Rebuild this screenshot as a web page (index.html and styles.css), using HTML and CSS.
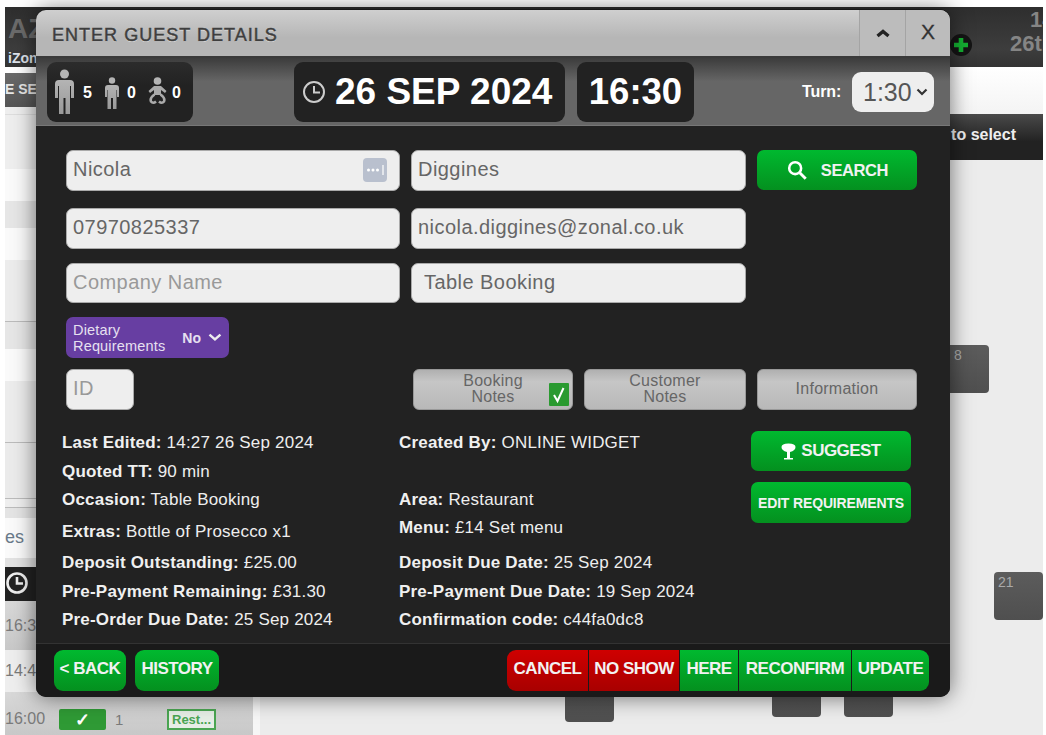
FILE: index.html
```html
<!DOCTYPE html>
<html lang="en">
<head>
<meta charset="utf-8">
<title>Enter Guest Details</title>
<link rel="stylesheet" href="styles.css">
</head>
<body>
<div class="app">
  <header class="topbar">
    <div class="brand"><span class="brand-big">AZ</span><span class="brand-small">iZonal</span></div>
    <div class="topbar-right">
      <span class="plus"><svg width="22" height="22" viewBox="0 0 22 22"><circle cx="11" cy="11" r="11" fill="#141414"/><path d="M11 4v14M4 11h14" stroke="#14b032" stroke-width="4.600"/></svg></span>
      <span class="top-date"><span class="top-time">14</span>26th</span>
    </div>
  </header>
  <div class="workspace">
    <aside class="side">
      <div class="side-gap"></div>
      <div class="side-head">E SEARCH</div>
      <div class="band b1"></div>
      <div class="band b2"></div>
      <div class="band b3"></div>
      <div class="band b4"></div>
      <div class="band b5 lined"></div>
      <div class="band b6"></div>
      <div class="band b7"></div>
      <div class="band b8 lined"></div>
      <div class="band b9 lined"></div>
      <div class="band b10 lined"></div>
      <div class="band b11"></div>
      <div class="band b12">es</div>
      <div class="band b13"></div>
      <div class="side-clock"><svg width="24" height="24" viewBox="0 0 24 24"><circle cx="12" cy="12" r="9.500" fill="none" stroke="#eee" stroke-width="2.600"/><path d="M12 6v6.500h6" fill="none" stroke="#eee" stroke-width="2.600"/></svg></div>
      <div class="slot grey"><span class="slot-time">16:30</span></div>
      <div class="slot light"><span class="slot-time">14:45</span></div>
      <div class="slot grey last">
        <span class="slot-time">16:00</span>
        <span class="slot-check">&#10003;</span>
        <span class="slot-num">1</span>
        <span class="slot-tag">Rest...</span>
      </div>
    </aside>
    <main class="floor">
      <div class="floor-gap"></div>
      <div class="floor-head">to select</div>
      <div class="table t8"><span>8</span></div>
      <div class="table t21"><span>21</span></div>
      <div class="table t-a"></div>
      <div class="table t-b"></div>
      <div class="table t-c"></div>
    </main>
  </div>
</div>

<section class="modal">
  <div class="titlebar">
    <h1 class="title">ENTER GUEST DETAILS</h1>
    <button class="tb-btn"><svg width="16" height="10" viewBox="0 0 16 10"><path d="M2.500 8 8 3.500 13.500 8" fill="none" stroke="#222" stroke-width="3.400"/></svg></button>
    <button class="tb-btn tb-x">X</button>
  </div>
  <div class="subbar">
    <div class="pill guests">
      <svg class="ic-adult" width="19" height="45" viewBox="0 0 19 45"><defs><linearGradient id="pg" x1="0" y1="0" x2="0" y2="1"><stop offset="0" stop-color="#b4b4b4"/><stop offset="1" stop-color="#999"/></linearGradient></defs><circle cx="9.500" cy="5" r="4.500" fill="#b4b4b4"/><path d="M4 11h11q4 0 4 4v14h-3V17h-1v28h-4.500V29h-2v16H4V17H3v12H0V15q0-4 4-4z" fill="url(#pg)"/></svg>
      <b class="count c1">5</b>
      <svg class="ic-teen" width="14" height="32" viewBox="0 0 14 32"><circle cx="7" cy="3.500" r="3.200" fill="#b4b4b4"/><path d="M3 8h8q3 0 3 3v9h-2v-7h-.5v19H8V21H6v11H2.500V13H2v7H0v-9q0-3 3-3z" fill="url(#pg)"/></svg>
      <b class="count c2">0</b>
      <svg class="ic-baby" width="19" height="28" viewBox="0 0 19 28"><circle cx="9.500" cy="4" r="3.800" fill="#b4b4b4"/><path d="M6 9h7l5.500 5-1.500 2-4-3v5H6v-5l-4 3-1.500-2z" fill="#aaa"/><path d="M6.500 17.500Q1.500 21 3 24.500q2 2.500 5 0M12.500 17.500q5 3.500 3.500 7-2 2.500-5 0" fill="none" stroke="#aaa" stroke-width="2.600"/></svg>
      <b class="count c3">0</b>
    </div>
    <div class="pill when">
      <svg width="24" height="24" viewBox="0 0 24 24"><circle cx="12" cy="12" r="10" fill="none" stroke="#ccc" stroke-width="2"/><path d="M12 6v6.500h6" fill="none" stroke="#ccc" stroke-width="2"/></svg>
      <span>26 SEP 2024</span>
    </div>
    <div class="pill clock">16:30</div>
    <label class="turn">Turn:</label>
    <div class="turn-wrap">
      <select class="turn-select"><option>1:30</option></select>
      <svg class="turn-chev" width="12" height="8" viewBox="0 0 12 8"><path d="M1.500 1.500 6 6l4.500-4.500" fill="none" stroke="#333" stroke-width="2.200"/></svg>
    </div>
  </div>

  <div class="body">
    <div class="form-row">
      <div class="field-wrap">
        <input class="field" value="Nicola">
        <span class="key"><svg width="24" height="24" viewBox="0 0 24 24"><rect width="24" height="24" rx="4" fill="#b9c0ce"/><circle cx="5.500" cy="12" r="1.500" fill="#fff"/><circle cx="10" cy="12" r="1.500" fill="#fff"/><circle cx="14.500" cy="12" r="1.500" fill="#fff"/><path d="M20 7v10" stroke="#fff" stroke-width="1.200"/></svg></span>
      </div>
      <input class="field" value="Diggines">
      <button class="btn search"><svg width="22" height="22" viewBox="0 0 24 24"><circle cx="10" cy="10" r="6.500" fill="none" stroke="#fff" stroke-width="2.800"/><path d="m15 15 6.500 6.500" stroke="#fff" stroke-width="3.200"/></svg><span>SEARCH</span></button>
    </div>
    <div class="form-row mt17">
      <input class="field" value="07970825337">
      <input class="field" value="nicola.diggines@zonal.co.uk">
    </div>
    <div class="form-row mt14 h40">
      <input class="field" placeholder="Company Name">
      <input class="field indent" value="Table Booking">
    </div>
    <div class="diet-row">
      <button class="diet">
        <span class="diet-label">Dietary<br>Requirements</span>
        <b class="diet-val">No</b>
        <svg width="14" height="9" viewBox="0 0 14 9"><path d="M1.500 1.500 7 6.500l5.500-5" fill="none" stroke="#eee" stroke-width="2.400"/></svg>
      </button>
    </div>
    <div class="notes-row">
      <input class="field id" placeholder="ID">
      <button class="note"><span class="two">Booking<br>Notes</span><span class="tick"><svg width="20" height="23" viewBox="0 0 20 23"><rect width="20" height="23" rx="1" fill="#2a9a30"/><path d="m5 12 3.500 6L14.500 5" fill="none" stroke="#fff" stroke-width="2"/></svg></span></button>
      <button class="note"><span class="two">Customer<br>Notes</span></button>
      <button class="note">Information</button>
    </div>

    <div class="info">
      <div class="info-col">
        <p class="line"><b>Last Edited:</b> 14:27 26 Sep 2024</p>
        <p class="line m1"><b>Quoted TT:</b> 90 min</p>
        <p class="line"><b>Occasion:</b> Table Booking</p>
        <p class="line m4"><b>Extras:</b> Bottle of Prosecco x1</p>
        <p class="line m3"><b>Deposit Outstanding:</b> £25.00</p>
        <p class="line m1"><b>Pre-Payment Remaining:</b> £31.30</p>
        <p class="line"><b>Pre-Order Due Date:</b> 25 Sep 2024</p>
      </div>
      <div class="info-col">
        <p class="line"><b>Created By:</b> ONLINE WIDGET</p>
        <p class="line m29"><b>Area:</b> Restaurant</p>
        <p class="line"><b>Menu:</b> £14 Set menu</p>
        <p class="line m7"><b>Deposit Due Date:</b> 25 Sep 2024</p>
        <p class="line m1"><b>Pre-Payment Due Date:</b> 19 Sep 2024</p>
        <p class="line"><b>Confirmation code:</b> c44fa0dc8</p>
      </div>
      <div class="info-actions">
        <button class="btn suggest"><svg width="15" height="17" viewBox="0 0 15 17"><path d="M.5 4q0-3.500 7-3.500t7 3.500q0 3.500-5.500 5v6h3v1.500H3V15h3V9Q.5 7.500.5 4z" fill="#fff"/></svg><span>SUGGEST</span></button>
        <button class="btn edit">EDIT REQUIREMENTS</button>
      </div>
    </div>
  </div>

  <div class="footer">
    <button class="btn foot back">&lt; BACK</button>
    <button class="btn foot history">HISTORY</button>
    <div class="seg">
      <button class="sbtn red cancel">CANCEL</button>
      <button class="sbtn red noshow">NO SHOW</button>
      <button class="sbtn green here">HERE</button>
      <button class="sbtn green reconfirm">RECONFIRM</button>
      <button class="sbtn green update">UPDATE</button>
    </div>
  </div>
</section>
</body>
</html>
```

FILE: styles.css
```css
* { box-sizing: border-box; }
html, body { margin: 0; height: 100%; overflow: hidden; background: #fff; }
body { font-family: "Liberation Sans", Arial, sans-serif; position: relative; }
button, input, select { font-family: inherit; }
p, h1 { margin: 0; }

/* background page */
.app { display: flex; flex-direction: column; height: 728px; margin: 7px 3px 0 5px; overflow: hidden; }
.topbar { height: 60px; flex: none; display: flex; justify-content: space-between; background: linear-gradient(#2e2e2e, #3d3d3d 70%, #333); }
.brand { display: flex; flex-direction: column; padding-left: 3px; }
.brand-big { font-size: 28px; font-weight: 700; color: #6b6b6b; line-height: 30px; margin-top: 7px; }
.brand-small { font-size: 14px; font-weight: 700; color: #dfe4ec; line-height: 16px; margin-top: 6px; }
.topbar-right { display: flex; width: 93px; justify-content: space-between; overflow: hidden; }
.plus { margin-top: 27px; }
.top-date { display: block; width: 33px; font-size: 22px; font-weight: 700; color: #858585; line-height: 24px; white-space: nowrap; padding-top: 1px; }
.top-time { display: block; margin-left: 20px; }
.workspace { flex: 1; display: flex; min-height: 0; }
.side { width: 248px; flex: none; display: flex; flex-direction: column; background: #eee; border-right: 7px solid #f6f6f6; box-sizing: content-box; }
.side-gap { height: 6px; flex: none; background: #fff; }
.side-head { height: 34px; flex: none; line-height: 32px; background: linear-gradient(#6a6a6a, #555); color: #e8e8e8; font-size: 14px; font-weight: 700; white-space: nowrap; }
.band { flex: none; font-size: 18px; color: #6a7a8a; }
.lined { border-bottom: 1px solid #bbb; }
.b1 { height: 55px; background: #eee; border-top: 1px solid #ddd; margin-top: 7px; }
.b2 { height: 32px; background: #fafafa; }
.b3 { height: 27px; background: #e6e6e6; }
.b4 { height: 32px; background: #fafafa; }
.b5 { height: 62px; background: #ececec; }
.b6 { height: 27px; background: #e6e6e6; }
.b7 { height: 32px; background: #fafafa; }
.b8 { height: 62px; background: #ececec; }
.b9 { height: 56px; background: #ebebeb; }
.b10 { height: 9px; background: #eee; }
.b11 { height: 10px; background: #e4e4e4; }
.b12 { height: 40px; line-height: 38px; background: #fafafa; }
.b13 { height: 9px; background: #e2e2e2; }
.side-clock { height: 34px; flex: none; background: #222; padding-top: 4px; display: flex; align-items: flex-start; }
.slot { flex: none; display: flex; align-items: center; font-size: 16px; color: #7a7a7a; }
.grey { height: 49px; background: linear-gradient(#d8d8d8, #c8c8c8); }
.last { height: 43px; padding-top: 11px; }
.light { height: 42px; background: #eee; }
.slot-time { width: 54px; }
.slot-check { width: 47px; height: 21px; background: #2f9a35; color: #fff; font-size: 18px; font-weight: 700; line-height: 22px; text-align: center; border-radius: 2px; }
.slot-num { width: 61px; padding-left: 9px; font-size: 15px; }
.slot-tag { border: 2px solid #4aa552; color: #4aa552; font-size: 13px; font-weight: 700; padding: 1px 3px; background: #e6eee6; }
.floor { flex: 1; position: relative; background: #ececec; }
.floor-gap { height: 47px; background: linear-gradient(#fff, #f4f4f4); }
.floor-head { height: 46px; background: linear-gradient(#4a4a4a, #222 60%); color: #eee; font-size: 16px; font-weight: 700; line-height: 42px; text-align: right; padding-right: 27px; }
.table { position: absolute; width: 49px; height: 48px; background: linear-gradient(#5c5c5c, #4f4f4f); border-radius: 4px; color: #aaa; font-size: 14px; padding: 2px 4px; }
.t8 { left: 680px; top: 278px; padding-left: 14px; }
.t21 { left: 734px; top: 505px; }
.t-a { left: 305px; top: 607px; }
.t-b { left: 512px; top: 602px; }
.t-c { left: 584px; top: 602px; }

/* modal */
.modal { position: absolute; left: 36px; top: 10px; width: 914px; height: 687px; display: flex; flex-direction: column; background: #222; border-radius: 10px; overflow: hidden; box-shadow: 0 0 22px rgba(0,0,0,.55), 0 -1px 0 #222; }
.titlebar { height: 48px; flex: none; display: flex; align-items: stretch; background: linear-gradient(#cfcfcf, #b6b6b6 60%); border-bottom: 2px solid #3a3a3a; }
.title { flex: 1; font-size: 18px; font-weight: 400; -webkit-text-stroke: .5px #444; color: #3c3c3c; line-height: 50px; padding-left: 16px; letter-spacing: 1.020px; text-shadow: 0 1px 0 #ddd; }
.tb-btn { width: 46px; border: 0; border-left: 1px solid #a4a4a4; background: #bcbcbc; padding: 0; display: flex; align-items: center; justify-content: center; font-size: 21px; color: #333; }
.tb-x { width: 45px; padding-bottom: 2px; -webkit-text-stroke: .3px #333; }
.subbar { height: 68px; flex: none; display: flex; align-items: center; padding-left: 11px; background: linear-gradient(#3c3c3c, #666 35%, #666); border-bottom: 1px solid #777; }
.pill { height: 60px; background: #222; border-radius: 9px; color: #fff; font-weight: 700; display: flex; align-items: center; }
.guests { width: 146px; padding-left: 8px; background: linear-gradient(#2c2c2c, #222 40%); }
.count { font-size: 16px; margin-top: 2px; width: 10px; }
.c1 { margin-left: 9px; }
.ic-teen { margin: 2px 0 0 12px; }
.c2 { margin-left: 8px; width: 11px; }
.ic-baby { margin: -1px 0 0 10px; }
.c3 { margin-left: 5px; }
.when { width: 271px; margin-left: 101px; padding-left: 8px; font-size: 37px; gap: 9px; }
.clock { width: 117px; margin-left: 12px; font-size: 36.500px; justify-content: center; }
.turn { margin-left: 108px; width: 50px; color: #fff; font-size: 16px; font-weight: 700; letter-spacing: -.1px; }
.turn-wrap { position: relative; width: 82px; height: 40px; }
.turn-select { width: 100%; height: 100%; border: 0; border-radius: 9px; background-color: #eee; color: #555; font-size: 25px; padding-left: 11px; appearance: none; }
.turn-chev { position: absolute; right: 6px; top: 16px; pointer-events: none; }

.body { flex: 1; min-height: 0; padding: 24px 0 0 30px; background: #222; }
.form-row { display: grid; grid-template-columns: 334px 335px 160px; column-gap: 11px; height: 41px; }
.mt17 { margin-top: 17px; }
.mt14 { margin-top: 14px; }
.h40 { height: 40px; }
.field-wrap { position: relative; }
.field { width: 100%; height: 100%; border: 1px solid #aaa; border-radius: 7px; background: #eee; color: #666; font-size: 20px; letter-spacing: .45px; padding: 0 6px 2px; outline: 0; }
.field::placeholder { color: #999; }
.indent { padding-left: 12px; }
.key { position: absolute; right: 13px; top: 8px; height: 24px; }
.btn { border: 0; border-radius: 7px; background: linear-gradient(#00b92f, #04901f); color: #f2f2f2; font-weight: 700; display: flex; align-items: center; justify-content: center; padding: 0; }
.search { height: 40px; gap: 13px; font-size: 16.500px; letter-spacing: -.4px; }
.diet-row { margin-top: 14px; height: 41px; }
.diet { width: 163px; height: 41px; border: 0; border-radius: 7px; background: #673ea2; color: #e6e0f0; display: flex; align-items: center; padding: 0 7px; text-align: left; }
.diet-label { font-size: 14.500px; line-height: 16px; letter-spacing: .17px; width: 110px; white-space: nowrap; }
.diet-val { font-size: 14px; width: 26px; }
.notes-row { display: grid; grid-template-columns: 336px 160px 162px 160px; column-gap: 11px; margin-top: 11px; height: 41px; }
.id { width: 68px; padding-left: 6px; font-size: 20px; }
.note { position: relative; border: 1px solid #999; border-radius: 6px; background: linear-gradient(#b0b0b0, #c6c6c6 30%, #b8b8b8); color: #666; font-size: 16px; letter-spacing: .25px; line-height: 16px; padding: 0 0 2px; }
.note .two { display: block; }
.tick { position: absolute; right: 3px; bottom: 3px; height: 23px; }
.info { display: grid; grid-template-columns: 337px 352px 160px; margin: 19px 0 0 -4px; color: #eee; }
.line { font-size: 17px; line-height: 28px; white-space: nowrap; letter-spacing: .2px; }
.line b { color: #f0f0f0; }
.m1 { margin-top: 1px; }
.m3 { margin-top: 3px; }
.m4 { margin-top: 4px; }
.m7 { margin-top: 7px; }
.m29 { margin-top: 29px; }
.info-actions { display: flex; flex-direction: column; gap: 11px; margin-top: 2px; }
.suggest { height: 40px; gap: 5px; font-size: 17px; letter-spacing: -.55px; }
.edit { height: 41px; font-size: 14px; letter-spacing: -.15px; white-space: nowrap; }
.footer { height: 54px; flex: none; display: flex; padding: 6px 21px 0 18px; gap: 9px; background: #1a1a1a; border-top: 1px solid #333; }
.foot { height: 41px; border-radius: 9px; font-size: 17px; letter-spacing: -.5px; white-space: nowrap; padding-bottom: 4px; }
.back { width: 72px; }
.history { width: 84px; }
.seg { margin-left: auto; display: flex; height: 41px; gap: 1px; border-radius: 9px; overflow: hidden; }
.sbtn { border: 0; padding: 0 0 4px; height: 41px; font-size: 17px; font-weight: 700; letter-spacing: -.5px; color: #f2f2f2; white-space: nowrap; }
.red { background: linear-gradient(#cf0000, #a80000); }
.green { background: linear-gradient(#00b92f, #04901f); }
.cancel { width: 81px; }
.noshow { width: 90px; }
.here { width: 58px; }
.reconfirm { width: 112px; }
.update { width: 77px; }
```
